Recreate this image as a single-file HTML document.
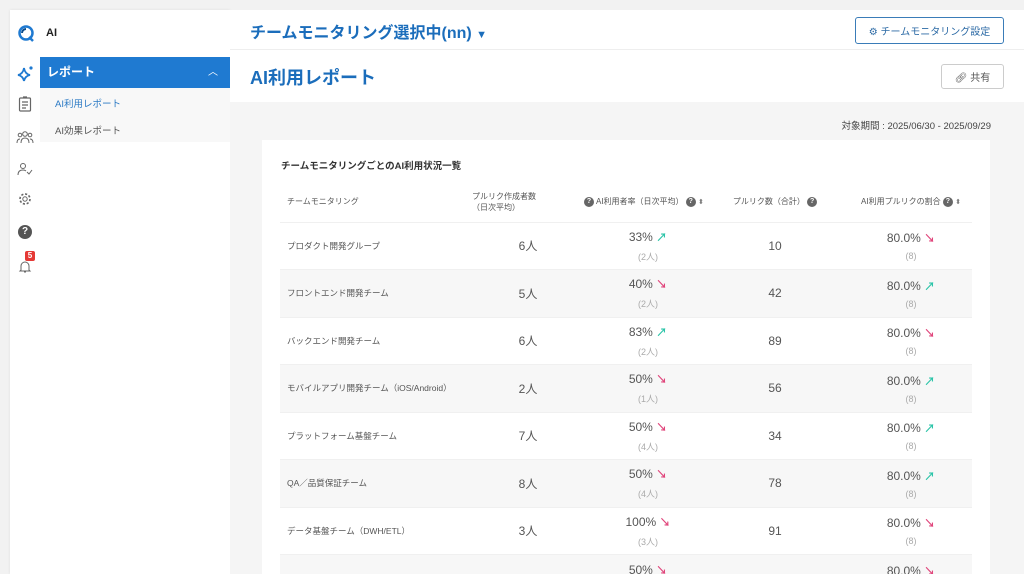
<!DOCTYPE html>
<html style="width:1024px;height:574px;overflow:hidden"><head><meta charset="utf-8">
<style>
*{box-sizing:border-box;margin:0;padding:0}
body{width:1024px;height:574px;overflow:hidden;background:#f2f2f2;font-family:"Liberation Sans","Noto Sans CJK JP",sans-serif;color:#333;position:relative}
.side{position:absolute;left:10px;top:10px;width:220px;height:564px;background:#fff;box-shadow:0 0 3px rgba(0,0,0,.08)}
.icons{position:absolute;left:0;top:0;width:30px;height:100%}
.main{position:absolute;left:230px;top:10px;width:794px;height:564px;background:#f5f5f5;overflow:hidden}
.top{height:40px;background:#fff;border-bottom:1px solid #eee;position:relative}
.ttl{height:52px;background:#fff;position:relative}
.btn{position:absolute;border:1px solid #ccc;border-radius:3px;font-size:10px;color:#555;background:#fff;display:flex;align-items:center;justify-content:center}
.card{position:absolute;left:32px;top:130px;width:728px;height:440px;background:#fff;overflow:hidden}
table{position:absolute;left:18px;top:42px;width:692px;border-collapse:collapse;table-layout:fixed}
td,th{font-weight:normal;font-size:12px;color:#555;text-align:center;height:47.5px;border-top:1px solid #f0f0f0}
th{font-size:8px;color:#555;height:40px;border:none}
td.n{font-size:8.5px;text-align:left;padding-left:7px;color:#555}
tr.g td{background:#f7f7f7}
.s{font-size:9px;color:#aaa;display:block;margin-top:5px}
.up{color:#2bc4a8;font-weight:bold;font-size:11px}
.dn{color:#e0457b;font-weight:bold;font-size:11px}
.q{display:inline-block;width:10px;height:10px;border-radius:50%;background:#666;color:#fff;font-size:7px;line-height:10px;text-align:center;font-weight:bold;vertical-align:middle}
.sort{font-size:7px;color:#777}
</style></head><body>
<div class="side">
 <div class="icons">
  <svg style="position:absolute;left:7px;top:14px" width="18" height="18" viewBox="0 0 18 18"><circle cx="9" cy="9" r="6.5" fill="none" stroke="#1f7ad1" stroke-width="2.5"/><path d="M5 9a4 4 0 0 1 4-4" stroke="#0b4c8c" stroke-width="2" fill="none"/><path d="M12 13l4 4" stroke="#1f7ad1" stroke-width="2.5"/></svg>
  <svg style="position:absolute;left:6px;top:55px" width="18" height="18" viewBox="0 0 18 18"><path d="M8 3Q9 9 14 10Q9 11 8 16Q7 11 2 10Q7 9 8 3z" fill="none" stroke="#1f7ad1" stroke-width="1.8"/><circle cx="15" cy="3" r="1.6" fill="#1f7ad1"/></svg>
  <svg style="position:absolute;left:8px;top:86px" width="14" height="16" viewBox="0 0 14 16"><rect x="1.5" y="2" width="11" height="13" rx="1" fill="none" stroke="#666" stroke-width="1.2"/><path d="M4 6h6M4 9h6M4 12h4M5 1h4" stroke="#666" stroke-width="1.2"/></svg>
  <svg style="position:absolute;left:6px;top:120px" width="18" height="14" viewBox="0 0 18 14"><circle cx="9" cy="4" r="2.3" fill="none" stroke="#666"/><circle cx="4" cy="5" r="1.8" fill="none" stroke="#666"/><circle cx="14" cy="5" r="1.8" fill="none" stroke="#666"/><path d="M5 13q0-5 4-5t4 5M1 13q0-4 3-4M17 13q0-4-3-4" fill="none" stroke="#666"/></svg>
  <svg style="position:absolute;left:7px;top:152px" width="16" height="14" viewBox="0 0 16 14"><circle cx="6" cy="4" r="2.5" fill="none" stroke="#666"/><path d="M1 13q0-5 5-5q2 0 3 1M10 10l2 2 3-4" fill="none" stroke="#666"/></svg>
  <svg style="position:absolute;left:8px;top:182px" width="14" height="14" viewBox="0 0 14 14"><circle cx="7" cy="7" r="2.2" fill="none" stroke="#666"/><circle cx="7" cy="7" r="5" fill="none" stroke="#666" stroke-width="1.6" stroke-dasharray="2.2 1.7"/></svg>
  <div style="position:absolute;left:8px;top:215px;width:14px;height:14px;border-radius:50%;background:#555;color:#fff;font-size:10px;font-weight:bold;text-align:center;line-height:14px">?</div>
  <svg style="position:absolute;left:8px;top:248px" width="14" height="16" viewBox="0 0 14 16"><path d="M3 12V8a4 4 0 0 1 8 0v4l1 1H2zM6 14h2" fill="none" stroke="#666"/></svg>
  <div style="position:absolute;left:15px;top:241px;width:10px;height:10px;background:#e53935;color:#fff;font-size:8px;font-weight:bold;text-align:center;line-height:10px;border-radius:2px">5</div>
 </div>
 <div style="position:absolute;left:36px;top:17px;font-size:11px;font-weight:bold;color:#222">AI</div>
 <div style="position:absolute;left:30px;top:47px;width:190px;height:31px;background:#1f7ad1;color:#fff;font-size:12px;font-weight:bold;line-height:31px;padding-left:7px">レポート<span style="position:absolute;right:12px;top:0;font-weight:normal;font-size:10px">︿</span></div>
 <div style="position:absolute;left:30px;top:78px;width:190px;height:54px;background:#f8f8f8"></div>
 <div style="position:absolute;left:45px;top:86px;font-size:9.5px;color:#2a79c4">AI利用レポート</div>
 <div style="position:absolute;left:45px;top:113px;font-size:9.5px;color:#555">AI効果レポート</div>
</div>
<div class="main">
 <div class="top">
  <div style="position:absolute;left:20px;top:9px;font-size:16px;font-weight:bold;color:#1b6dbb">チームモニタリング選択中(nn) <span style="font-size:11px">▼</span></div>
  <div class="btn" style="left:625px;top:7px;width:149px;height:27px;border-color:#3a7cb8;color:#2c6aa5">⚙ チームモニタリング設定</div>
 </div>
 <div class="ttl">
  <div style="position:absolute;left:20px;top:14px;font-size:18px;font-weight:bold;color:#1b6dbb">AI利用レポート</div>
  <div class="btn" style="left:711px;top:14px;width:63px;height:25px">🔗︎ 共有</div>
 </div>
 <div style="position:absolute;right:33px;top:108px;font-size:9.5px;color:#444">対象期間 : 2025/06/30 - 2025/09/29</div>
 <div class="card">
  <div style="position:absolute;left:19px;top:18px;font-size:9.5px;font-weight:bold;color:#333">チームモニタリングごとのAI利用状況一覧</div>
  <table>
   <colgroup><col style="width:180px"><col style="width:136px"><col style="width:104px"><col style="width:150px"><col style="width:122px"></colgroup>
   <tr><th style="text-align:left;padding-left:7px">チームモニタリング</th><th style="position:relative;text-align:left;padding-left:12px">プルリク作成者数<br>（日次平均）<span class="q" style="position:absolute;right:2px;top:15px">?</span></th><th style="white-space:nowrap">AI利用者率（日次平均） <span class="q">?</span> <span class="sort">⬍</span></th><th>プルリク数（合計） <span class="q">?</span></th><th style="white-space:nowrap">AI利用プルリクの割合 <span class="q">?</span> <span class="sort">⬍</span></th></tr>
   <tr><td class="n">プロダクト開発グループ</td><td>6人</td><td>33% <span class="up">↗</span><span class="s">(2人)</span></td><td>10</td><td>80.0% <span class="dn">↘</span><span class="s">(8)</span></td></tr>
   <tr class="g"><td class="n">フロントエンド開発チーム</td><td>5人</td><td>40% <span class="dn">↘</span><span class="s">(2人)</span></td><td>42</td><td>80.0% <span class="up">↗</span><span class="s">(8)</span></td></tr>
   <tr><td class="n">バックエンド開発チーム</td><td>6人</td><td>83% <span class="up">↗</span><span class="s">(2人)</span></td><td>89</td><td>80.0% <span class="dn">↘</span><span class="s">(8)</span></td></tr>
   <tr class="g"><td class="n">モバイルアプリ開発チーム（iOS/Android）</td><td>2人</td><td>50% <span class="dn">↘</span><span class="s">(1人)</span></td><td>56</td><td>80.0% <span class="up">↗</span><span class="s">(8)</span></td></tr>
   <tr><td class="n">プラットフォーム基盤チーム</td><td>7人</td><td>50% <span class="dn">↘</span><span class="s">(4人)</span></td><td>34</td><td>80.0% <span class="up">↗</span><span class="s">(8)</span></td></tr>
   <tr class="g"><td class="n">QA／品質保証チーム</td><td>8人</td><td>50% <span class="dn">↘</span><span class="s">(4人)</span></td><td>78</td><td>80.0% <span class="up">↗</span><span class="s">(8)</span></td></tr>
   <tr><td class="n">データ基盤チーム（DWH/ETL）</td><td>3人</td><td>100% <span class="dn">↘</span><span class="s">(3人)</span></td><td>91</td><td>80.0% <span class="dn">↘</span><span class="s">(8)</span></td></tr>
   <tr class="g"><td class="n"></td><td></td><td>50% <span class="dn">↘</span><span class="s">(4人)</span></td><td></td><td>80.0% <span class="dn">↘</span><span class="s">(8)</span></td></tr>
  </table>
 </div>
</div>
</body></html>
